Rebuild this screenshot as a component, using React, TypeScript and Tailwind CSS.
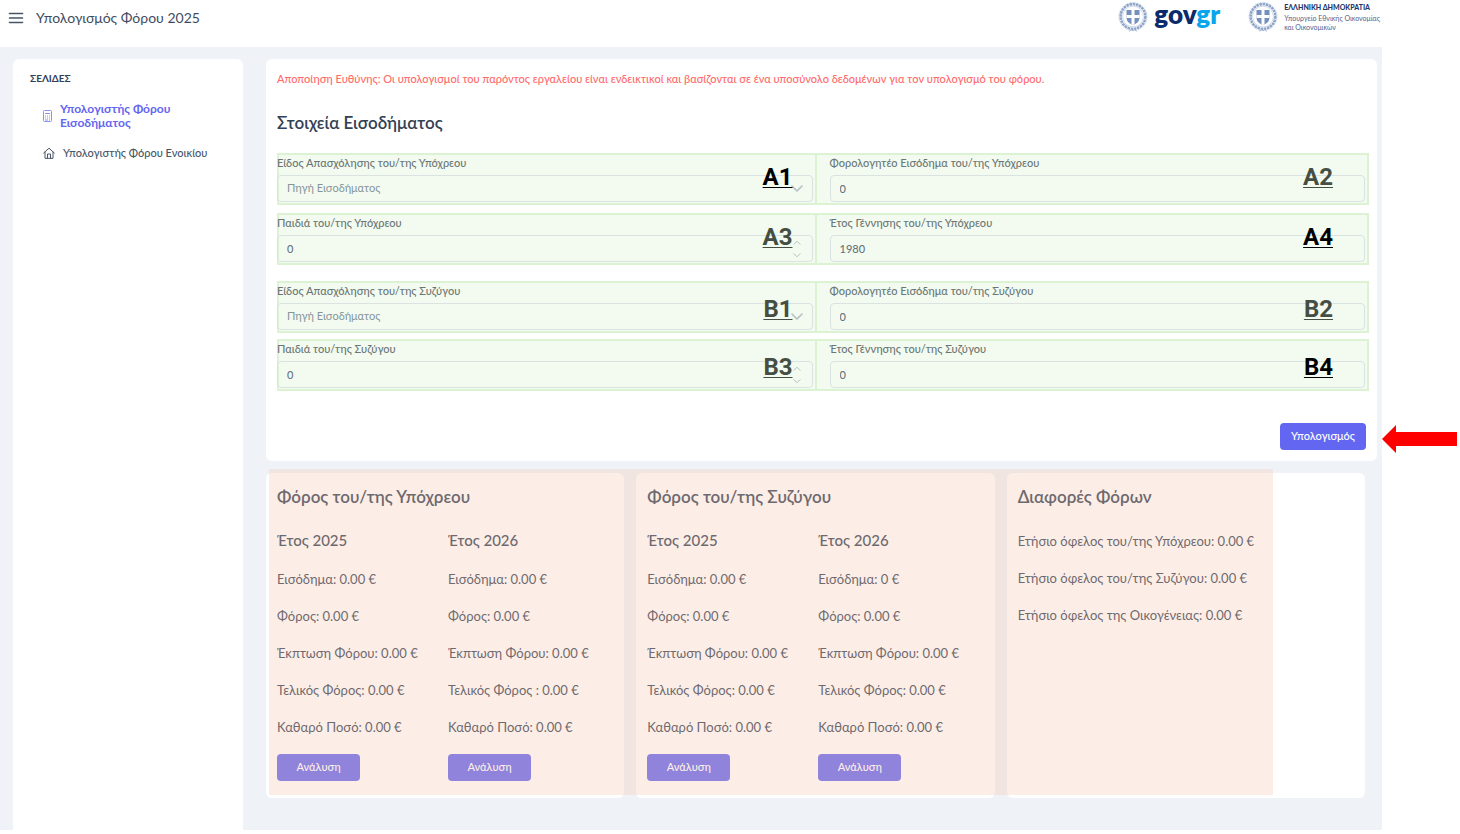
import { useId, useState } from 'react'

interface FieldProps {
  label: string
  mark: string
  muted?: boolean
  kind?: 'text' | 'select' | 'stepper'
  initial?: string
}

interface TaxColumn {
  year: string
  lines: string[]
}

const FORM_GROUPS: { name: string; gap: string; markTop: string; rows: FieldProps[][] }[] = [
  {
    name: 'A',
    gap: 'gap-2',
    markTop: 'top-1.5',
    rows: [
      [
        { label: 'Είδος Απασχόλησης του/της Υπόχρεου', mark: 'A1', kind: 'select' },
        { label: 'Φορολογητέο Εισόδημα του/της Υπόχρεου', mark: 'A2', muted: true },
      ],
      [
        { label: 'Παιδιά του/της Υπόχρεου', mark: 'A3', muted: true, kind: 'stepper' },
        { label: 'Έτος Γέννησης του/της Υπόχρεου', mark: 'A4', initial: '1980' },
      ],
    ],
  },
  {
    name: 'B',
    gap: 'gap-1.5',
    markTop: 'top-2.5',
    rows: [
      [
        { label: 'Είδος Απασχόλησης του/της Συζύγου', mark: 'B1', muted: true, kind: 'select' },
        { label: 'Φορολογητέο Εισόδημα του/της Συζύγου', mark: 'B2', muted: true },
      ],
      [
        { label: 'Παιδιά του/της Συζύγου', mark: 'B3', muted: true, kind: 'stepper' },
        { label: 'Έτος Γέννησης του/της Συζύγου', mark: 'B4' },
      ],
    ],
  },
]

const TAX_CARDS: { title: string; columns: TaxColumn[] }[] = [
  {
    title: 'Φόρος του/της Υπόχρεου',
    columns: [
      {
        year: 'Έτος 2025',
        lines: ['Εισόδημα: 0.00 €', 'Φόρος: 0.00 €', 'Έκπτωση Φόρου: 0.00 €', 'Τελικός Φόρος: 0.00 €', 'Καθαρό Ποσό: 0.00 €'],
      },
      {
        year: 'Έτος 2026',
        lines: ['Εισόδημα: 0.00 €', 'Φόρος: 0.00 €', 'Έκπτωση Φόρου: 0.00 €', 'Τελικός Φόρος : 0.00 €', 'Καθαρό Ποσό: 0.00 €'],
      },
    ],
  },
  {
    title: 'Φόρος του/της Συζύγου',
    columns: [
      {
        year: 'Έτος 2025',
        lines: ['Εισόδημα: 0.00 €', 'Φόρος: 0.00 €', 'Έκπτωση Φόρου: 0.00 €', 'Τελικός Φόρος: 0.00 €', 'Καθαρό Ποσό: 0.00 €'],
      },
      {
        year: 'Έτος 2026',
        lines: ['Εισόδημα: 0 €', 'Φόρος: 0.00 €', 'Έκπτωση Φόρου: 0.00 €', 'Τελικός Φόρος: 0.00 €', 'Καθαρό Ποσό: 0.00 €'],
      },
    ],
  },
]

const SAVINGS = [
  'Ετήσιο όφελος του/της Υπόχρεου: 0.00 €',
  'Ετήσιο όφελος του/της Συζύγου: 0.00 €',
  'Ετήσιο όφελος της Οικογένειας: 0.00 €',
]

function Emblem() {
  return (
    <svg className="h-[30px] w-[30px] shrink-0" viewBox="0 0 30 30" fill="none">
      <circle cx="15" cy="14.5" r="12.4" stroke="#8fa5c9" strokeWidth="2.6" strokeDasharray="2.6 0.6" />
      <circle cx="15" cy="14.5" r="14.1" stroke="#b9c7de" strokeWidth="0.8" strokeDasharray="1.4 1.2" />
      <circle cx="15" cy="14.5" r="10.4" stroke="#c6d2e5" strokeWidth="0.8" />
      <path d="M8.500 8h13v7.500c0 3.800-2.600 6.200-6.500 7.600-3.900-1.400-6.500-3.800-6.500-7.600z" fill="#7590bd" />
      <path d="M13.500 8h3v5h5v3h-5v6.500l-1.500.6-1.500-.6V16h-5v-3h5z" fill="#fff" />
      <path d="M11 29.300l2.500-1.600 1.500.9 1.500-.9 2.500 1.600" stroke="#a9bad6" strokeWidth="1" />
    </svg>
  )
}

function Chevron({ up, className }: { up?: boolean; className: string }) {
  return (
    <svg className={className} viewBox="0 0 12 8" fill="none" stroke="#b3c1c3" strokeWidth="1.6" strokeLinecap="round" strokeLinejoin="round">
      <path d={up ? 'M1 7l5-5 5 5' : 'M1 1l5 5 5-5'} />
    </svg>
  )
}

function Field({ label, mark, muted, kind = 'text', initial = '0', markTop }: FieldProps & { markTop: string }) {
  const id = useId()
  const [value, setValue] = useState(kind === 'select' ? '' : initial)
  const box =
    'block h-[27px] w-full appearance-none rounded border border-[#dae3e2] bg-transparent px-[9px] text-[11px] outline-none focus:border-indigo-400'
  const step = (n: number) => setValue(String(Math.max(0, Number(value) + n)))

  return (
    <div className="relative">
      <label htmlFor={id} className="mb-1 block text-[11px] leading-4 font-medium text-[#6b7776]">
        {label}
      </label>
      <div className="relative">
        {kind === 'select' ? (
          <select id={id} value={value} onChange={(e) => setValue(e.target.value)} className={`${box} text-[#86959a]`}>
            <option value="">Πηγή Εισοδήματος</option>
          </select>
        ) : (
          <input id={id} value={value} onChange={(e) => setValue(e.target.value)} className={`${box} font-medium text-[#66747a]`} />
        )}
        {kind === 'select' && <Chevron className="pointer-events-none absolute top-2.5 right-2.5 h-2 w-3" />}
        {kind === 'stepper' && (
          <div className="absolute inset-y-0 right-3 flex flex-col justify-center gap-2">
            <button type="button" aria-label="+" onClick={() => step(1)}>
              <Chevron up className="block h-[5px] w-2" />
            </button>
            <button type="button" aria-label="-" onClick={() => step(-1)}>
              <Chevron className="block h-[5px] w-2" />
            </button>
          </div>
        )}
      </div>
      <span
        className={`pointer-events-none absolute font-[Roboto,sans-serif] text-2xl font-bold underline decoration-1 underline-offset-2 ${markTop} ${
          kind === 'text' ? 'right-8' : 'right-5'
        } ${muted ? 'text-[#454e42]' : 'text-black'}`}
      >
        {mark}
      </span>
    </div>
  )
}

function Header() {
  return (
    <header className="flex h-[47px] items-start justify-between bg-white pr-0.5 pl-2">
      <div className="flex items-center gap-3 pt-1.5">
        <button type="button" aria-label="Μενού">
          <svg className="block h-4 w-4" viewBox="0 0 16 16" stroke="#475569" strokeWidth="1.6" strokeLinecap="round">
            <path d="M1.500 3.500h13M1.500 8h13M1.500 12.500h13" />
          </svg>
        </button>
        <span className="text-sm leading-6 text-[#3f4c5f]">Υπολογισμός Φόρου 2025</span>
      </div>
      <div className="flex items-start gap-7">
        <a href="#govgr" className="flex items-start gap-1.5 pt-0.5">
          <Emblem />
          <span className="text-[26px] leading-6 font-extrabold text-[#0b2a6b]">
            gov<span className="text-[#0aa5ec]">gr</span>
          </span>
        </a>
        <a href="#minfin" className="flex items-start gap-1.5 pt-0.5 text-[7px] text-[#52648c]">
          <Emblem />
          <span className="block pt-px leading-[9px]">
            <b className="mb-0.5 block font-black text-[#23386b]">ΕΛΛΗΝΙΚΗ ΔΗΜΟΚΡΑΤΙΑ</b>
            Υπουργείο Εθνικής Οικονομίας
            <br />
            και Οικονομικών
          </span>
        </a>
      </div>
    </header>
  )
}

function Sidebar() {
  return (
    <aside className="w-[230px] shrink-0 rounded-t-md bg-white px-[17px] pt-[11px]">
      <h2 className="text-[10px] leading-4 font-bold text-[#334155]">ΣΕΛΙΔΕΣ</h2>
      <nav className="mt-4 flex flex-col gap-[15px] pl-[13px]">
        <a href="#income" className="flex items-center gap-2 text-xs leading-[14px] font-bold text-[#6366f1]">
          <svg className="h-3 w-[9px] shrink-0" viewBox="0 0 9 12" fill="none" stroke="#8f91f5">
            <rect x="0.500" y="0.500" width="8" height="11" rx="1" />
            <path d="M2 3.500h5M2 6h1M4 6h1M6 6h1M2 8h1M4 8h1M6 8h1M2 10h3M6 10h1" />
          </svg>
          Υπολογιστής Φόρου Εισοδήματος
        </a>
        <a href="#rent" className="flex items-center gap-2 text-[11px] leading-4 font-medium text-[#475569]">
          <svg className="h-3 w-3 shrink-0" viewBox="0 0 12 12" fill="none" stroke="#475569" strokeLinecap="round" strokeLinejoin="round">
            <path d="M.7 6L6 1.200 11.300 6M2 5v6.300h8V5M4.500 11.300V7h3v4.300" />
          </svg>
          Υπολογιστής Φόρου Ενοικίου
        </a>
      </nav>
    </aside>
  )
}

function IncomeForm() {
  return (
    <form className="rounded-md bg-white px-[11px] pt-3 pb-[11px]" onSubmit={(e) => e.preventDefault()}>
      <p className="text-[11px] leading-4 font-medium text-[#ff6b6b]">
        Αποποίηση Ευθύνης: Οι υπολογισμοί του παρόντος εργαλείου είναι ενδεικτικοί και βασίζονται σε ένα υποσύνολο δεδομένων για τον υπολογισμό του φόρου.
      </p>
      <h1 className="mt-6 text-[17px] leading-6 font-semibold text-[#334155]">Στοιχεία Εισοδήματος</h1>
      <div className="-mr-[3px] mt-[18px] flex flex-col gap-4">
        {FORM_GROUPS.map((group) => (
          <div key={group.name} className={`flex flex-col ${group.gap}`}>
            {group.rows.map((row) => (
              <div key={row[0].mark} className="flex h-[52px] bg-[#f3fbf0] outline-2 -outline-offset-2 outline-[#dbf3d3]">
                <div className="flex-1 border-r-2 border-[#dbf3d3] pt-0.5 pr-0.5">
                  <Field {...row[0]} markTop={group.markTop} />
                </div>
                <div className="flex-1 pt-0.5 pr-1 pl-[13px]">
                  <Field {...row[1]} markTop={group.markTop} />
                </div>
              </div>
            ))}
          </div>
        ))}
      </div>
      <div className="relative mt-8 flex justify-end">
        <button type="submit" className="h-[27px] rounded bg-[#6366f1] px-[11px] text-[11px] font-medium text-white">
          Υπολογισμός
        </button>
        <svg className="absolute top-0.5 left-full ml-4 h-7 w-[75px]" viewBox="0 0 75 28" fill="#fe0000">
          <path d="M0 14L14 0v7h61v14H14v7z" />
        </svg>
      </div>
    </form>
  )
}

function Results() {
  return (
    <section className="relative mt-3 mr-3 grid grid-cols-3 gap-3 text-[13px] text-[#334155]">
      {TAX_CARDS.map((card) => (
        <article key={card.title} className="rounded-md bg-white px-[11px] pt-3 pb-[17px]">
          <h2 className="text-[17px] leading-6 font-semibold">{card.title}</h2>
          <div className="mt-[19px] flex">
            {card.columns.map((col) => (
              <div key={col.year} className="w-[171px] shrink-0 last:w-auto">
                <h3 className="text-[15px] leading-6 font-medium">{col.year}</h3>
                {col.lines.map((line) => (
                  <p key={line} className="mt-[17px] leading-5">
                    {line}
                  </p>
                ))}
                <button type="button" className="mt-[17px] h-[27px] w-[83px] rounded bg-[#6366f1] text-[11px] font-medium text-white">
                  Ανάλυση
                </button>
              </div>
            ))}
          </div>
        </article>
      ))}
      <article className="rounded-md bg-white px-[11px] pt-3">
        <h2 className="text-[17px] leading-6 font-semibold">Διαφορές Φόρων</h2>
        <div className="mt-[22px] flex flex-col gap-[17px] leading-5">
          {SAVINGS.map((line) => (
            <p key={line}>{line}</p>
          ))}
        </div>
      </article>
      <div className="pointer-events-none absolute -top-1 right-[92px] bottom-[3px] left-[3px] bg-[#f6c6ad]/30" />
    </section>
  )
}

export default function App() {
  return (
    <div className="flex min-h-screen flex-col bg-white pr-[78px] pb-1 font-[Lato,'Liberation_Sans',sans-serif]">
      <Header />
      <div className="flex flex-1 gap-[23px] bg-[#eff3f8] pt-3 pr-[5px] pl-[13px]">
        <Sidebar />
        <main className="min-w-0 flex-1">
          <IncomeForm />
          <Results />
        </main>
      </div>
    </div>
  )
}
